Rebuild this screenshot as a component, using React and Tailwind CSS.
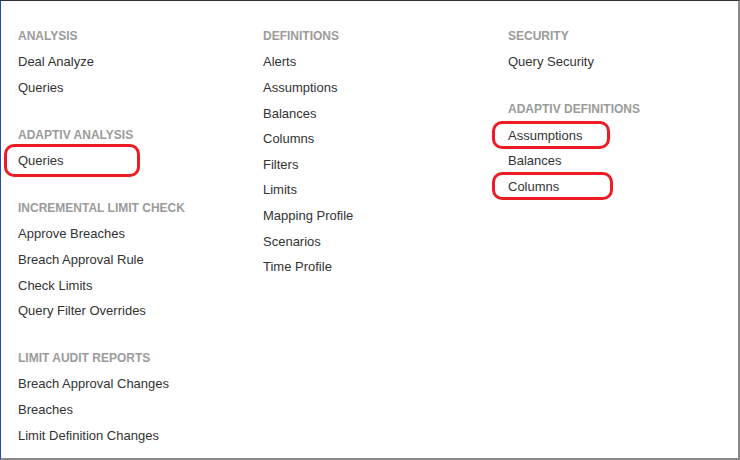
const columns = [
  [
    { title: "Analysis", items: ["Deal Analyze", "Queries"] },
    { title: "Adaptiv Analysis", items: ["Queries"], marked: { Queries: "queries" } },
    {
      title: "Incremental Limit Check",
      items: ["Approve Breaches", "Breach Approval Rule", "Check Limits", "Query Filter Overrides"],
    },
    {
      title: "Limit Audit Reports",
      items: ["Breach Approval Changes", "Breaches", "Limit Definition Changes"],
    },
  ],
  [
    {
      title: "Definitions",
      items: [
        "Alerts",
        "Assumptions",
        "Balances",
        "Columns",
        "Filters",
        "Limits",
        "Mapping Profile",
        "Scenarios",
        "Time Profile",
      ],
    },
  ],
  [
    { title: "Security", items: ["Query Security"] },
    {
      title: "Adaptiv Definitions",
      items: ["Assumptions", "Balances", "Columns"],
      marked: { Assumptions: "assumptions", Columns: "columns" },
    },
  ],
];

// red hand-drawn highlight boxes over some links
const markClass = {
  queries: "left-[-14px] top-[-10px] w-[136px] h-[33px]",
  assumptions: "left-[-16px] top-[-7.5px] w-[118px] h-[28px]",
  columns: "left-[-16px] top-[-7.5px] w-[121px] h-[28px]",
};

const MenuItem = ({ label, mark }) => (
  <div className="h-[25.6px] flex items-center">
    <span className="relative text-[13px] text-[#333333] leading-none">
      {mark && (
        <span
          className={`absolute border-[3.5px] border-[#ed1c24] rounded-[10px] pointer-events-none ${markClass[mark]}`}
        />
      )}
      {label}
    </span>
  </div>
);

const Group = ({ title, items, marked = {} }) => (
  <div className="mb-[22px]">
    <div className="h-[25.6px] flex items-center text-[12px] font-bold uppercase text-[#9b9b9b] leading-none">
      {title}
    </div>
    {items.map((item, i) => (
      <MenuItem key={i} label={item} mark={marked[item]} />
    ))}
  </div>
);

export default function App() {
  return (
    <div
      className="w-[740px] h-[460px] bg-white border-t border-t-[#2f2f2f] border-l border-l-[#1c48b8] border-r-2 border-r-[#8a8a8a] border-b-2 border-b-[#8a8a8a] overflow-hidden"
      style={{ fontFamily: '"Liberation Sans", Arial, sans-serif' }}
    >
      <div className="grid grid-cols-[245px_245px_1fr] pl-[17px] pt-[22.5px]">
        {columns.map((groups, c) => (
          <div key={c}>
            {groups.map((g, i) => (
              <Group key={i} {...g} />
            ))}
          </div>
        ))}
      </div>
    </div>
  );
}
